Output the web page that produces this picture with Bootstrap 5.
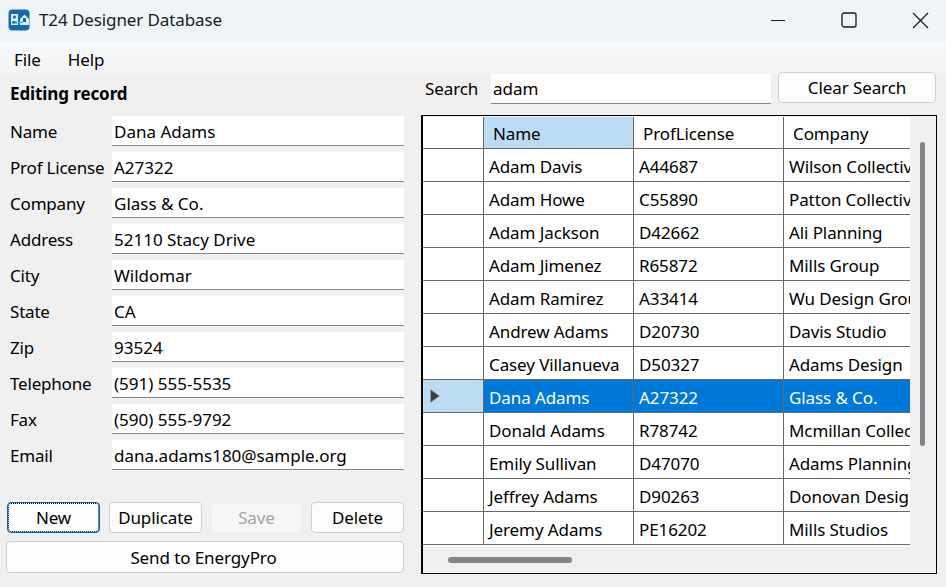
<!DOCTYPE html>
<html lang="en">
<head>
  <meta charset="UTF-8" />
  <title>T24 Designer Database</title>
  <link href="https://cdn.jsdelivr.net/npm/bootstrap@5.3.3/dist/css/bootstrap.min.css" rel="stylesheet">
  <style>
    html, body { height: 587px; overflow: hidden; }
    body {
      background: #f0f0f0;
      color: #000;
      font-family: "Noto Sans", "Liberation Sans", sans-serif;
      font-size: 17px;
      letter-spacing: -0.1px;
    }
    .title-bar { height: 42px; background: #eff4f9; padding: 0 0 2px 8px; color: #1a1a1a; }
    .title-bar .win-title { margin-left: 9px; font-size: 17px; }
    .win-btn { width: 46px; height: 40px; margin-left: 25px; display: flex; align-items: center; justify-content: center; }
    .win-btns { margin-right: 3px; }
    .menu-bar { height: 33px; background: linear-gradient(#f7f8fb, #f3f3f3); padding: 2px 0 0 14px; gap: 27px; }
    .left-pane { width: 421px; padding: 7px 17px 0 6px; }
    .right-pane { width: 525px; }
    .pane-title { font-weight: 700; height: 24px; line-height: 24px; padding-left: 4px; margin-bottom: 8px; }
    .field-row { height: 36px; padding-left: 4px; }
    .field-row label { width: 102px; flex: none; letter-spacing: -0.2px; }
    .field-input.form-control {
      height: 30px; padding: 0 2px; border: 0; border-bottom: 1px solid #868686; border-radius: 0;
      background: #fff; font-size: 17px; color: #000; box-shadow: none;
    }
    .field-row .field-input.form-control { margin-bottom: 2px; padding-top: 2px; }
    .act-btn.btn {
      height: 31px; padding: 0; background: #fdfdfd; color: #000; border: 1px solid #d0d0d0;
      border-radius: 4px; font-size: 17px; letter-spacing: -0.1px;
    }
    .act-btn.btn:disabled { background: #f6f6f6; color: #a3a3a3; border-color: #eeeeee; opacity: 1; }
    .act-btn.default-btn { border: 1px solid #0067c0; outline: 1px dotted #000; outline-offset: -2px; margin-left: 1px; }
    .buttons-row { margin-top: 28px; gap: 9px; }
    .buttons-row .act-btn { width: 93px; flex: none; }
    .buttons-row .save-btn { width: 91px; }
    .send-btn.btn { height: 32px; width: 398px; margin-top: 8px; padding: 2px 3px 0 0; }
    .search-row { height: 33px; padding-top: 1px; margin-top: -3px; margin-bottom: 10px; padding-left: 4px; }
    .search-row span { width: 66px; flex: none; }
    .search-row .field-input { width: 280px; height: 30px; }
    .search-row .act-btn { width: 158px; margin-left: 7px; margin-bottom: 3px; }
    .grid-box { width: 516px; height: 459px; border: 1px solid #000; border-left-width: 2px; padding-top: 1px; overflow: hidden; }
    .grid-view { width: 488px; height: 430px; overflow: hidden; background: #fff; }
    .data-grid { table-layout: fixed; width: 488px; border-collapse: separate; border-spacing: 0; }
    .data-grid td, .data-grid th {
      height: 33px; padding: 4px 0 0 5px; font-weight: 400; white-space: nowrap; overflow: hidden;
      border-right: 1px solid #696969; border-bottom: 1px solid #696969;
      box-sizing: border-box; vertical-align: middle;
    }
    .data-grid th { height: 32px; padding: 2px 0 0 9px; }
    .data-grid .row-head { padding: 0; }
    .data-grid tr > :last-child { border-right: 0; }
    .data-grid th.sorted { background: #bcdcf4; }
    .data-grid tr.picked td { background: #0078d7; color: #fff; }
    .data-grid tr.picked td.row-head { background: #bcdcf4; }
    .row-arrow { display: block; margin-left: 6px; }
    .v-bar { width: 26px; height: 430px; }
    .v-thumb { width: 5px; height: 304px; margin: 25px 0 0 10px; background: #858585; border-radius: 3px; }
    .h-bar { height: 27px; padding: 10px 0 0 25px; }
    .h-thumb { width: 124px; height: 6px; background: #858585; border-radius: 3px; }
  </style>
</head>
<body>
  <div class="title-bar d-flex align-items-center">
    <svg width="22" height="22" viewBox="0 0 22 22">
      <rect x="0.5" y="0.5" width="21" height="21" rx="4" fill="#1668ad"/>
      <rect x="3" y="5" width="7" height="11" fill="#d9ecfa"/>
      <circle cx="6.5" cy="8" r="1.6" fill="#1668ad"/>
      <path d="M4 13.5c0-2 5-2 5 0v1H4z" fill="#1668ad"/>
      <path d="M12 10l4.5-4.5L21 10v6h-9z" fill="#d9ecfa"/>
      <rect x="15" y="9" width="3" height="4" fill="#1668ad"/>
      <rect x="7" y="12.5" width="8" height="1.6" fill="#35c0e8"/>
    </svg>
    <span class="win-title">T24 Designer Database</span>
    <div class="ms-auto d-flex win-btns">
      <div class="win-btn">
        <svg width="16" height="16" viewBox="0 0 16 16"><path d="M1 8.5h14" stroke="#1a1a1a" stroke-width="1"/></svg>
      </div>
      <div class="win-btn">
        <svg width="16" height="16" viewBox="0 0 16 16"><rect x="1" y="1" width="14" height="14" rx="2" fill="none" stroke="#1a1a1a" stroke-width="1.3"/></svg>
      </div>
      <div class="win-btn">
        <svg width="17" height="17" viewBox="0 0 17 17"><path d="M1 1l15 15M16 1L1 16" stroke="#1a1a1a" stroke-width="1.2"/></svg>
      </div>
    </div>
  </div>
  <div class="menu-bar d-flex align-items-center">
    <span>File</span>
    <span>Help</span>
  </div>
  <div class="d-flex">
    <div class="left-pane">
      <div class="pane-title">Editing record</div>
      <div id="fields"></div>
      <div class="buttons-row d-flex">
        <button class="act-btn default-btn btn">New</button>
        <button class="act-btn btn">Duplicate</button>
        <button class="act-btn btn save-btn" disabled>Save</button>
        <button class="act-btn btn">Delete</button>
      </div>
      <button class="act-btn send-btn btn d-block">Send to EnergyPro</button>
    </div>
    <div class="right-pane">
      <div class="search-row d-flex align-items-center">
        <span>Search</span>
        <input class="field-input form-control" value="adam">
        <button class="act-btn btn">Clear Search</button>
      </div>
      <div class="grid-box">
        <div class="d-flex">
          <div class="grid-view">
            <table class="data-grid">
              <colgroup><col style="width:61px"><col style="width:150px"><col style="width:150px"><col style="width:127px"></colgroup>
              <thead><tr><th class="row-head"></th><th class="sorted">Name</th><th>ProfLicense</th><th>Company</th></tr></thead>
              <tbody id="rows"></tbody>
            </table>
          </div>
          <div class="v-bar"><div class="v-thumb"></div></div>
        </div>
        <div class="h-bar"><div class="h-thumb"></div></div>
      </div>
    </div>
  </div>
  <script>
    const fields = [['Name','Dana Adams'],['Prof License','A27322'],['Company','Glass & Co.'],['Address','52110 Stacy Drive'],['City','Wildomar'],['State','CA'],['Zip','93524'],['Telephone','(591) 555-5535'],['Fax','(590) 555-9792'],['Email','dana.adams180@sample.org']];
    document.getElementById('fields').innerHTML = fields.map(f =>
      `<div class="field-row d-flex align-items-center"><label>${f[0]}</label><input class="field-input form-control" value="${f[1].replace('&','&amp;')}"></div>`).join('');

    const rows = [['Adam Davis','A44687','Wilson Collective'],['Adam Howe','C55890','Patton Collective'],['Adam Jackson','D42662','Ali Planning'],['Adam Jimenez','R65872','Mills Group'],['Adam Ramirez','A33414','Wu Design Group'],['Andrew Adams','D20730','Davis Studio'],['Casey Villanueva','D50327','Adams Design'],['Dana Adams','A27322','Glass &amp; Co.'],['Donald Adams','R78742','Mcmillan Collective'],['Emily Sullivan','D47070','Adams Planning'],['Jeffrey Adams','D90263','Donovan Design'],['Jeremy Adams','PE16202','Mills Studios']];
    const arrow = '<svg class="row-arrow" width="12" height="14" viewBox="0 0 12 14"><path d="M1.5 .5l9 6.5-9 6.5z" fill="#3c3c3c" stroke="#a0a0a0" stroke-width=".8"/></svg>';
    document.getElementById('rows').innerHTML = rows.map(r => {
      const picked = r[0] === 'Dana Adams';
      return `<tr class="${picked ? 'picked' : ''}"><td class="row-head">${picked ? arrow : ''}</td><td>${r[0]}</td><td>${r[1]}</td><td>${r[2]}</td></tr>`;
    }).join('');
  </script>
  <script src="https://cdn.jsdelivr.net/npm/bootstrap@5.3.3/dist/js/bootstrap.bundle.min.js"></script>
</body>
</html>
